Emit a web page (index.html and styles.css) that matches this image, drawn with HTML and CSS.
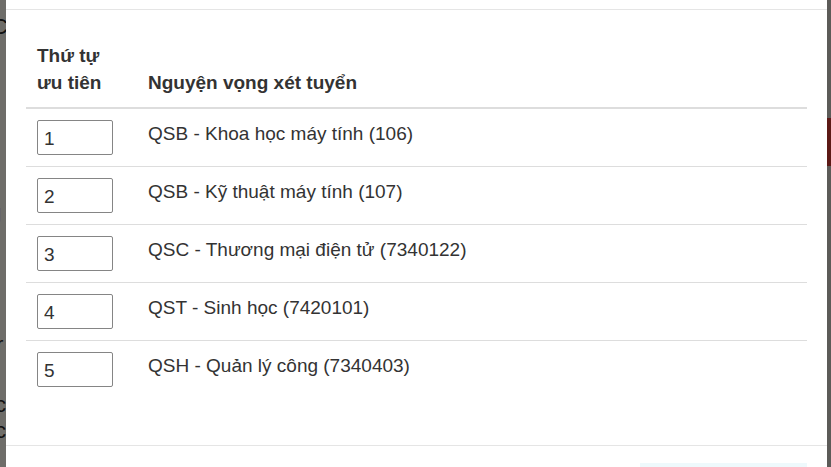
FILE: index.html
```html
<!DOCTYPE html>
<html lang="vi">
<head>
<meta charset="utf-8">
<title>Nguyện vọng xét tuyển</title>
<link rel="stylesheet" href="styles.css">
</head>
<body>
<div class="page">
  <div class="page-lines">
    <span class="ln l1">C</span>
    <span class="ln l2">(</span>
    <span class="ln l3">:</span>
    <span class="ln l4">g</span>
    <span class="ln l5">i</span>
    <span class="ln l6">r</span>
    <span class="ln l7">c</span>
    <span class="ln l8">c</span>
  </div>
  <div class="side-right"><div class="red-bar"></div></div>
</div>
<div class="backdrop"></div>
<div class="modal">
  <div class="modal-header"></div>
  <div class="modal-body">
    <table class="table">
      <thead>
        <tr>
          <th class="col-order">Thứ tự<br>ưu tiên</th>
          <th class="col-name">Nguyện vọng xét tuyển</th>
        </tr>
      </thead>
      <tbody>
        <tr><td class="col-order"><input class="order-input" type="text" value="1"></td><td class="col-name">QSB - Khoa học máy tính (106)</td></tr>
        <tr><td class="col-order"><input class="order-input" type="text" value="2"></td><td class="col-name">QSB - Kỹ thuật máy tính (107)</td></tr>
        <tr><td class="col-order"><input class="order-input" type="text" value="3"></td><td class="col-name">QSC - Thương mại điện tử (7340122)</td></tr>
        <tr><td class="col-order"><input class="order-input" type="text" value="4"></td><td class="col-name">QST - Sinh học (7420101)</td></tr>
        <tr><td class="col-order"><input class="order-input" type="text" value="5"></td><td class="col-name">QSH - Quản lý công (7340403)</td></tr>
      </tbody>
    </table>
  </div>
  <div class="modal-footer"><button class="btn-save" type="button"></button></div>
</div>
</body>
</html>
```
FILE: styles.css
```css
* { box-sizing: border-box; }
html, body { margin: 0; padding: 0; height: 100%; overflow: hidden; }
body {
  font-family: "Liberation Sans", Arial, sans-serif;
  color: #333;
  background: #dcdad2;
}
.page {
  position: relative;
  height: 467px;
  display: flex;
  justify-content: space-between;
  overflow: hidden;
}
.page-lines {
  display: flex;
  flex-direction: column;
  width: 40px;
  margin-left: -8px;
  font-size: 22px;
  color: #222;
}
.ln { display: block; height: 0; position: relative; }
.l1 { top: 14px; }
.l2 { top: 46px; }
.l3 { top: 116px; }
.l4 { top: 200px; color: #b3120f; font-weight: bold; left: -4px; }
.l5 { top: 300px; left: 2px; }
.l6 { top: 332px; left: 4px; }
.l7 { top: 392px; left: 3px; }
.l8 { top: 418px; left: 3px; }
.side-right {
  width: 5px;
  background: #b8b6b0;
  padding-top: 118px;
}
.red-bar { height: 48px; background: #b8322c; }
.backdrop {
  position: absolute;
  inset: 0;
  background: rgba(0, 0, 0, 0.5);
}
.modal {
  position: absolute;
  top: 0;
  left: 6px;
  width: 821px;
  height: 467px;
  background: #fff;
  display: flex;
  flex-direction: column;
  overflow: hidden;
}
.modal-header {
  height: 10px;
  flex: none;
  border-bottom: 1px solid #e5e5e5;
}
.modal-body {
  flex: none;
  padding: 21px 20px 20px;
}
.table {
  width: 100%;
  border-collapse: collapse;
  margin-bottom: 27px;
  font-size: 19px;
  line-height: 27px;
}
.table th {
  text-align: left;
  vertical-align: bottom;
  font-weight: bold;
  padding: 11px;
  border-bottom: 2px solid #ddd;
}
.table td {
  vertical-align: top;
  padding: 11px;
  border-top: 1px solid #ddd;
}
.table .col-name { padding-left: 12px; }
.table tbody tr:first-child td { border-top: 0; }
.col-order { width: 110px; }
.order-input {
  display: block;
  width: 76px;
  height: 35px;
  border: 1px solid #858585;
  border-radius: 2px;
  padding: 3px 6px 0;
  font-family: "Liberation Sans", Arial, sans-serif;
  font-size: 19px;
  color: #333;
  background: #fff;
}
.modal-footer {
  border-top: 1px solid #e5e5e5;
  padding: 17px 20px 0;
  display: flex;
  justify-content: flex-end;
  align-items: flex-start;
  flex: 1;
  min-height: 0;
}
.btn-save {
  width: 167px;
  height: 4px;
  border: 0;
  background: #eef9fc;
}
```
